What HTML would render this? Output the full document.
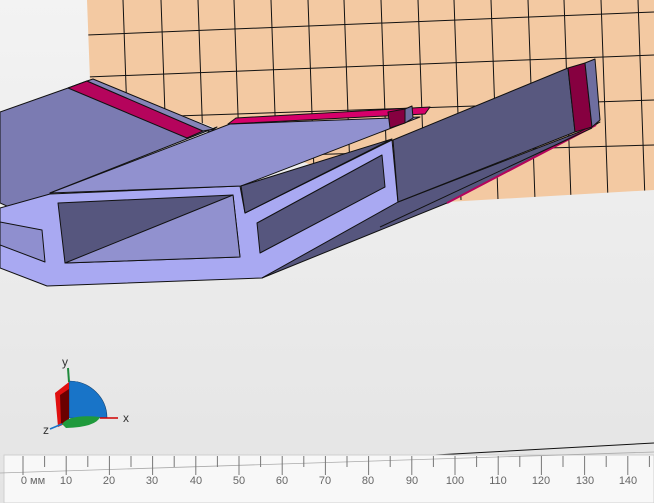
<!DOCTYPE html>
<html><head><meta charset="utf-8"><style>
html,body{margin:0;padding:0;}
body{width:654px;height:503px;overflow:hidden;background:linear-gradient(#f3f3f3,#e4e4e4);font-family:"Liberation Sans",sans-serif;}
svg{position:absolute;left:0;top:0;}
</style></head><body>
<svg width="654" height="503" viewBox="0 0 654 503" xmlns="http://www.w3.org/2000/svg">
<defs><clipPath id="g"><polygon points="87,0 654,0 654,190 413,204 90,80"/></clipPath></defs>
<polygon points="87,0 654,0 654,190 413,204 90,80" fill="#f3c9a2"/>
<g clip-path="url(#g)" stroke="#111" stroke-width="1" fill="none">
<line x1="123" y1="0" x2="130" y2="200"/><line x1="161" y1="0" x2="168" y2="200"/>
<line x1="198" y1="0" x2="205" y2="200"/><line x1="234" y1="0" x2="241" y2="200"/>
<line x1="271" y1="0" x2="278" y2="200"/><line x1="308" y1="0" x2="315" y2="200"/>
<line x1="344" y1="0" x2="351" y2="200"/><line x1="381" y1="0" x2="388" y2="200"/>
<line x1="418" y1="0" x2="425" y2="200"/><line x1="454" y1="0" x2="461" y2="200"/>
<line x1="491" y1="0" x2="498" y2="200"/><line x1="528" y1="0" x2="535" y2="200"/>
<line x1="564" y1="0" x2="571" y2="200"/><line x1="601" y1="0" x2="608" y2="200"/>
<line x1="638" y1="0" x2="645" y2="200"/>
<line x1="87" y1="35" x2="654" y2="12"/><line x1="87" y1="77" x2="654" y2="55"/>
<line x1="87" y1="119" x2="654" y2="100"/><line x1="87" y1="161" x2="654" y2="145"/>
</g>
<line x1="435" y1="455" x2="654" y2="443" stroke="#111" stroke-width="1"/>
<g stroke="#111" stroke-width="1" stroke-linejoin="round">
<!-- left slab -->
<polygon points="0,112 68,88 87,81 210,132 217,127 50,193 52,221 43,222 0,203" fill="#7b7bb2"/>
<polygon points="68,88 87,81 203,131 187,138" fill="#b5045c"/>
<polygon points="87,81 93,79 214,129 203,131" fill="#8585b8"/>
<!-- light front face -->
<polygon points="0,208 50,194 240,186 245,213 392,140 398,203 262,278 47,286 0,268" fill="#a9a9f2"/>
<polygon points="0,222 42,230 45,262 0,245" fill="#8f8fcf"/>
<!-- big top face -->
<polygon points="50,193 230,124 420,117 241,186" fill="#9191cf"/>
<polygon points="228,124 236,118 430,107 425,114" fill="#d6006a"/>
<polygon points="388,112 405,109 405,123 390,128" fill="#860040"/>
<polygon points="405,109 412,106 413,118 405,123" fill="#6e6ea0"/>
<!-- left window -->
<polygon points="58,203 233,195 240,257 65,263" fill="#56567e"/>
<polygon points="65,263 233,195 240,257" fill="#9191cf"/>
<!-- dark band and right window -->
<polygon points="241,186 392,139 245,213" fill="#56567e"/>
<polygon points="257,223 382,155 385,187 260,253" fill="#56567e"/>
<!-- arm underside -->
<polygon points="262,278 398,202 592,127 600,122 447,203" fill="#56567e"/>
<line x1="447" y1="203" x2="596" y2="125" stroke="#b5045c" stroke-width="2"/>
<!-- arm side face -->
<polygon points="393,140 568,68 575,132 398,202" fill="#58587f"/>
<polygon points="568,68 585,63 592,127 575,132" fill="#860040"/>
<polygon points="585,63 595,59 600,120 592,127" fill="#6e6ea0"/>
</g>
<line x1="380" y1="227" x2="592" y2="128" stroke="#111"/>
<!-- axis widget -->
<path d="M69,418 L69,381 A38,37 0 0 1 107,418 Z" fill="#1874c8" stroke="#0c3e70" stroke-width="0.6"/>
<polygon points="55,393 69,382 69,422 58,427" fill="#e01010"/>
<polygon points="60,395 69,389 69,420 61,424" fill="#6a0000"/>
<path d="M62,424 Q70,414 100,417 Q96,427 66,428 Z" fill="#1f9a3c"/>
<line x1="69" y1="382" x2="68" y2="368" stroke="#1f8a3c" stroke-width="2"/>
<line x1="100" y1="418" x2="118" y2="418" stroke="#d00000" stroke-width="1.5"/>
<line x1="62" y1="424" x2="50" y2="429" stroke="#1874c8" stroke-width="1.5"/>
<text x="62" y="366" font-size="12" fill="#333" font-family="Liberation Sans,sans-serif">y</text>
<text x="123" y="422" font-size="12" fill="#333" font-family="Liberation Sans,sans-serif">x</text>
<text x="43" y="434" font-size="12" fill="#333" font-family="Liberation Sans,sans-serif">z</text>
<!-- ruler -->
<rect x="4" y="455" width="650" height="48" fill="#f8f8f8" stroke="#cfcfcf"/>
<line x1="0" y1="473" x2="654" y2="452" stroke="#aaa" stroke-width="0.8"/>
<g stroke="#777" stroke-width="1">
<line x1="23" y1="456" x2="23" y2="475"/><line x1="44.6" y1="456" x2="44.6" y2="467"/>
<line x1="66.2" y1="456" x2="66.2" y2="475"/><line x1="87.8" y1="456" x2="87.8" y2="467"/>
<line x1="109.4" y1="456" x2="109.4" y2="475"/><line x1="131" y1="456" x2="131" y2="467"/>
<line x1="152.6" y1="456" x2="152.6" y2="475"/><line x1="174.2" y1="456" x2="174.2" y2="467"/>
<line x1="195.8" y1="456" x2="195.8" y2="475"/><line x1="217.4" y1="456" x2="217.4" y2="467"/>
<line x1="239" y1="456" x2="239" y2="475"/><line x1="260.6" y1="456" x2="260.6" y2="467"/>
<line x1="282.2" y1="456" x2="282.2" y2="475"/><line x1="303.8" y1="456" x2="303.8" y2="467"/>
<line x1="325.4" y1="456" x2="325.4" y2="475"/><line x1="347" y1="456" x2="347" y2="467"/>
<line x1="368.6" y1="456" x2="368.6" y2="475"/><line x1="390.2" y1="456" x2="390.2" y2="467"/>
<line x1="411.8" y1="456" x2="411.8" y2="475"/><line x1="433.4" y1="456" x2="433.4" y2="467"/>
<line x1="455" y1="456" x2="455" y2="475"/><line x1="476.6" y1="456" x2="476.6" y2="467"/>
<line x1="498.2" y1="456" x2="498.2" y2="475"/><line x1="519.8" y1="456" x2="519.8" y2="467"/>
<line x1="541.4" y1="456" x2="541.4" y2="475"/><line x1="563" y1="456" x2="563" y2="467"/>
<line x1="584.6" y1="456" x2="584.6" y2="475"/><line x1="606.2" y1="456" x2="606.2" y2="467"/>
<line x1="627.8" y1="456" x2="627.8" y2="475"/><line x1="649.4" y1="456" x2="649.4" y2="467"/>
</g>
<g font-size="11" fill="#666" font-family="Liberation Sans,sans-serif" text-anchor="middle">
<text x="33" y="484">0 мм</text><text x="66" y="484">10</text><text x="109" y="484">20</text>
<text x="152" y="484">30</text><text x="196" y="484">40</text><text x="239" y="484">50</text>
<text x="282" y="484">60</text><text x="325" y="484">70</text><text x="368" y="484">80</text>
<text x="412" y="484">90</text><text x="455" y="484">100</text><text x="498" y="484">110</text>
<text x="541" y="484">120</text><text x="585" y="484">130</text><text x="628" y="484">140</text>
</g>
</svg>
</body></html>
